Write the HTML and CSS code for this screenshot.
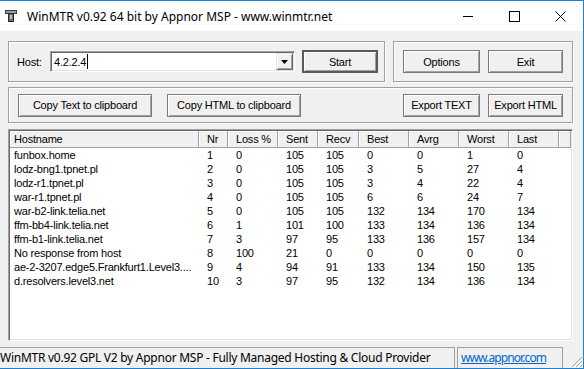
FILE: index.html
```html
<!DOCTYPE html>
<html lang="en">
<head>
    <meta charset="UTF-8">
    <title>WinMTR</title>
    <link rel="stylesheet" href="styles.css">
</head>
<body>
    <div class="window">
        <!-- Title bar -->
        <div class="titlebar">
            <svg class="app-icon" width="12" height="12" viewBox="0 0 12 12">
                <rect x="0.5" y="0.5" width="11" height="3" fill="#9c9c9c" stroke="#3a3a3a"/>
                <rect x="3.5" y="3.5" width="5" height="8" fill="#6e6e6e" stroke="#2a2a2a"/>
                <rect x="5" y="5" width="2" height="4" fill="#bdbdbd"/>
            </svg>
            <span class="title">WinMTR v0.92 64 bit by Appnor MSP - www.winmtr.net</span>
            <div class="caption-buttons">
                <div class="cap-btn">
                    <svg width="10" height="10" viewBox="0 0 10 10"><line x1="0" y1="5.5" x2="10" y2="5.5" stroke="#000"/></svg>
                </div>
                <div class="cap-btn">
                    <svg width="11" height="11" viewBox="0 0 11 11"><rect x="0.5" y="0.5" width="10" height="10" fill="none" stroke="#000"/></svg>
                </div>
                <div class="cap-btn">
                    <svg width="11" height="11" viewBox="0 0 11 11"><path d="M0.5 0.5 L10.5 10.5 M10.5 0.5 L0.5 10.5" stroke="#000" fill="none"/></svg>
                </div>
            </div>
        </div>

        <!-- Dialog -->
        <div class="client">
            <div class="top-row">
                <div class="group host-group">
                    <span class="label">Host:</span>
                    <div class="combo">
                        <span class="combo-text">4.2.2.4<span class="caret"></span></span>
                        <div class="combo-drop">
                            <svg width="7" height="4" viewBox="0 0 7 4"><path d="M0 0 H7 L3.5 4 Z" fill="#000"/></svg>
                        </div>
                    </div>
                    <button class="btn btn-default btn-start">Start</button>
                </div>
                <div class="group opt-group">
                    <button class="btn btn-a">Options</button>
                    <button class="btn btn-b">Exit</button>
                </div>
            </div>

            <div class="group action-group">
                <button class="btn btn-copy">Copy Text to clipboard</button>
                <button class="btn btn-copy">Copy HTML to clipboard</button>
                <button class="btn btn-a btn-push">Export TEXT</button>
                <button class="btn btn-b">Export HTML</button>
            </div>

            <div class="list">
                <div class="row head">
                    <span>Hostname</span><span>Nr</span><span>Loss %</span><span>Sent</span><span>Recv</span><span>Best</span><span>Avrg</span><span>Worst</span><span>Last</span><span></span>
                </div>
                <div class="row"><span>funbox.home</span><span>1</span><span>0</span><span>105</span><span>105</span><span>0</span><span>0</span><span>1</span><span>0</span></div>
                <div class="row"><span>lodz-bng1.tpnet.pl</span><span>2</span><span>0</span><span>105</span><span>105</span><span>3</span><span>5</span><span>27</span><span>4</span></div>
                <div class="row"><span>lodz-r1.tpnet.pl</span><span>3</span><span>0</span><span>105</span><span>105</span><span>3</span><span>4</span><span>22</span><span>4</span></div>
                <div class="row"><span>war-r1.tpnet.pl</span><span>4</span><span>0</span><span>105</span><span>105</span><span>6</span><span>6</span><span>24</span><span>7</span></div>
                <div class="row"><span>war-b2-link.telia.net</span><span>5</span><span>0</span><span>105</span><span>105</span><span>132</span><span>134</span><span>170</span><span>134</span></div>
                <div class="row"><span>ffm-bb4-link.telia.net</span><span>6</span><span>1</span><span>101</span><span>100</span><span>133</span><span>134</span><span>136</span><span>134</span></div>
                <div class="row"><span>ffm-b1-link.telia.net</span><span>7</span><span>3</span><span>97</span><span>95</span><span>133</span><span>136</span><span>157</span><span>134</span></div>
                <div class="row"><span>No response from host</span><span>8</span><span>100</span><span>21</span><span>0</span><span>0</span><span>0</span><span>0</span><span>0</span></div>
                <div class="row"><span>ae-2-3207.edge5.Frankfurt1.Level3....</span><span>9</span><span>4</span><span>94</span><span>91</span><span>133</span><span>134</span><span>150</span><span>135</span></div>
                <div class="row"><span>d.resolvers.level3.net</span><span>10</span><span>3</span><span>97</span><span>95</span><span>132</span><span>134</span><span>136</span><span>134</span></div>
            </div>
        </div>

        <!-- Status bar -->
        <div class="statusbar">
            <div class="pane pane-main">WinMTR v0.92 GPL V2 by Appnor MSP - Fully Managed Hosting &amp; Cloud Provider</div>
            <div class="pane pane-link"><a href="#">www.appnor.com</a></div>
            <svg class="grip" width="13" height="13" viewBox="0 0 13 13">
                <path d="M12 2 L2 12 M12 6 L6 12 M12 10 L10 12" stroke="#a0a0a0" fill="none"/>
                <path d="M13 3 L3 13 M13 7 L7 13" stroke="#fff" fill="none"/>
            </svg>
        </div>
    </div>
</body>
</html>
```

FILE: styles.css
```css
body {
    margin: 0;
    background-color: #ffffff;
    font-family: "Liberation Sans", Arial, sans-serif;
}
.window {
    width: 583px;
    height: 367px;
    border-top: 1px solid #1883d7;
    border-right: 1px solid #1883d7;
    border-bottom: 1px solid #1883d7;
    background-color: #f0f0f0;
    display: flex;
    flex-direction: column;
}

/* title bar */
.titlebar {
    height: 30px;
    background-color: #ffffff;
    display: flex;
    align-items: center;
}
.app-icon {
    margin-left: 5px;
}
.title {
    margin-left: 10px;
    font-family: "Noto Sans", sans-serif;
    font-size: 12px;
    color: #000;
}
.caption-buttons {
    margin-left: auto;
    display: flex;
    height: 30px;
}
.cap-btn {
    width: 46px;
    height: 30px;
    display: flex;
    justify-content: center;
    align-items: center;
}

/* dialog area */
.client {
    flex: 1;
    padding: 10px 10px 2px 8px;
    display: flex;
    flex-direction: column;
    font-size: 11px;
    letter-spacing: -0.2px;
}
.group {
    box-sizing: border-box;
    border: 1px solid #a0a0a0;
    box-shadow: inset 1px 1px #ffffff, 1px 1px #ffffff;
}
.top-row {
    display: flex;
    gap: 8px;
    height: 41px;
}
.host-group {
    width: 377px;
    display: flex;
    align-items: center;
    padding-left: 8px;
}
.label {
    width: 33px;
}
.combo {
    box-sizing: border-box;
    width: 245px;
    height: 21px;
    margin-right: 7px;
    background-color: #fff;
    border: 1px solid;
    border-color: #a0a0a0 #ffffff #ffffff #a0a0a0;
    box-shadow: inset 1px 1px #696969, inset -1px -1px #e3e3e3;
    display: flex;
    align-items: center;
    padding: 0 1px 0 3px;
}
.combo-text {
    flex: 1;
    display: flex;
    align-items: center;
}
.caret {
    width: 1px;
    height: 15px;
    background-color: #000;
    margin-left: 1px;
}
.combo-drop {
    box-sizing: border-box;
    width: 17px;
    height: 17px;
    border: 1px solid;
    border-color: #e3e3e3 #696969 #696969 #e3e3e3;
    box-shadow: inset 1px 1px #fff, inset -1px -1px #a0a0a0;
    background-color: #f0f0f0;
    display: flex;
    justify-content: center;
    align-items: center;
}

/* push buttons */
.btn {
    box-sizing: border-box;
    height: 23px;
    padding: 0;
    font-family: "Liberation Sans", Arial, sans-serif;
    font-size: 11px;
    letter-spacing: -0.2px;
    color: #000;
    background-color: #f0f0f0;
    border: 1px solid #7a7a7a;
    box-shadow: inset 1px 1px #ffffff, inset -1px -1px #a0a0a0;
}
.btn-default {
    border: 2px solid #5a5a5a;
    box-shadow: inset 1px 1px #ffffff, inset -1px -1px #a0a0a0;
}
.btn-start {
    width: 76px;
}
.btn-a {
    width: 77px;
}
.btn-b {
    width: 75px;
}
.opt-group {
    flex: 1;
    display: flex;
    align-items: center;
    gap: 8px;
    padding-left: 9px;
}
.action-group {
    height: 36px;
    margin-top: 5px;
    display: flex;
    align-items: center;
    gap: 8px;
    padding: 0 9px;
}
.btn-copy {
    width: 134px;
}
.btn-copy + .btn-copy {
    margin-left: 7px;
}
.btn-push {
    margin-left: auto;
}

/* list view */
.list {
    flex: 1;
    margin-top: 6px;
    background-color: #ffffff;
    border: 1px solid;
    border-color: #a0a0a0 #ffffff #ffffff #a0a0a0;
    box-shadow: inset 1px 1px #696969, inset -1px -1px #e3e3e3;
    padding: 1px;
    overflow: hidden;
}
.row {
    display: grid;
    grid-template-columns: 189px 29px 50px 40px 41px 50px 50px 50px 50px 1fr;
    height: 14px;
    line-height: 14px;
}
.row span {
    padding-left: 8px;
    white-space: nowrap;
    overflow: hidden;
}
.row span:first-child {
    padding-left: 4px;
}
.row.head {
    height: 17px;
    line-height: 16px;
}
.row.head span {
    box-sizing: border-box;
    background-color: #f0f0f0;
    border-right: 1px solid #a0a0a0;
    border-bottom: 1px solid #a0a0a0;
    box-shadow: inset 1px 1px #ffffff;
}

/* status bar */
.statusbar {
    height: 25px;
    display: flex;
    align-items: flex-end;
    font-family: "Noto Sans", sans-serif;
    font-size: 12px;
    letter-spacing: -0.26px;
    position: relative;
}
.pane {
    box-sizing: border-box;
    height: 21px;
    line-height: 19px;
    border-top: 1px solid #a0a0a0;
    border-right: 1px solid #a0a0a0;
    white-space: nowrap;
}
.pane-main {
    width: 455px;
}
.pane-link {
    width: 106px;
    margin-left: 2px;
    border-left: 1px solid #a0a0a0;
    padding-left: 3px;
}
.pane-link a {
    color: #0066cc;
    letter-spacing: -0.9px;
}
.grip {
    position: absolute;
    right: 0;
    bottom: 0;
}
```
